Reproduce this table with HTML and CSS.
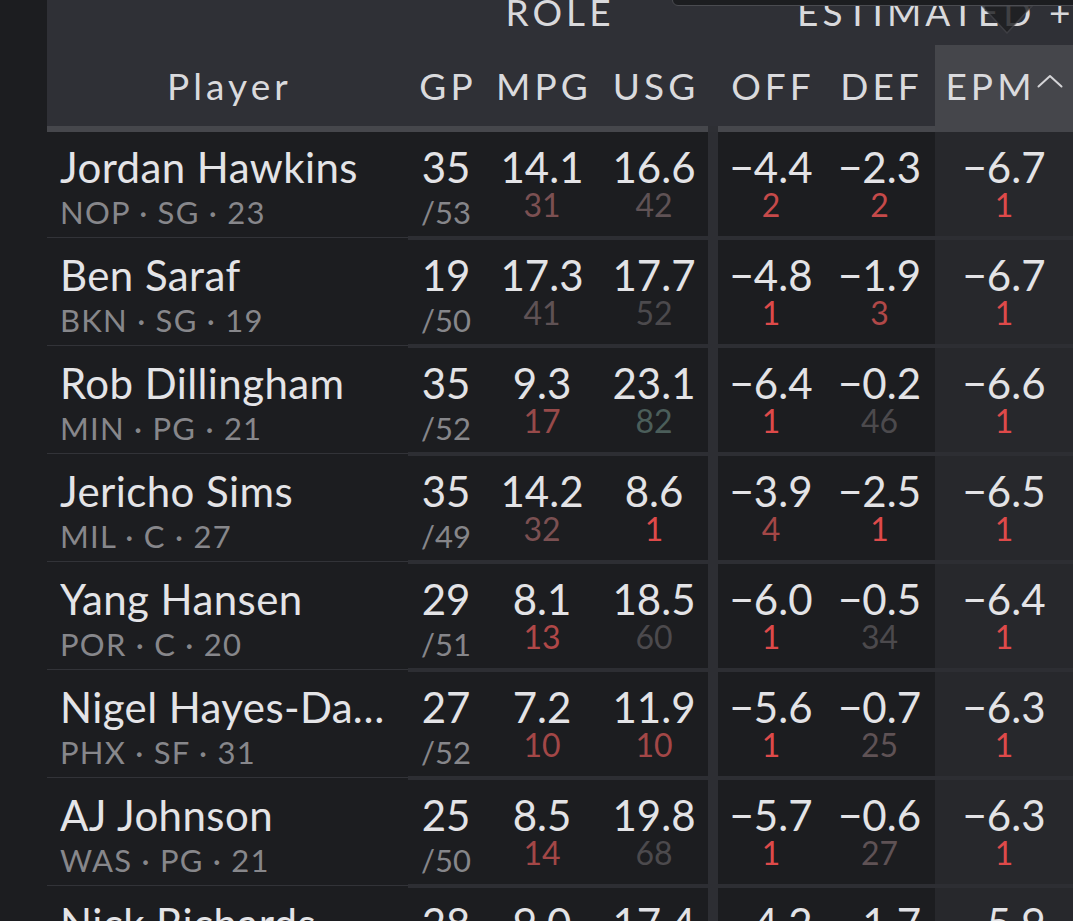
FILE: index.html
```html
<!DOCTYPE html>
<html lang="en">
<head>
<meta charset="utf-8">
<title>EPM table</title>
<link rel="stylesheet" href="styles.css">
</head>
<body>
<div class="page">
  <div class="table">
    <div class="grid grp">
      <div class="g-player"></div>
      <div class="g-role">ROLE</div>
      <div class="g-sep"></div>
      <div class="g-est">ESTIMATED +/-</div>
    </div>
    <div class="grid cols">
      <div class="h">Player</div>
      <div class="h">GP</div>
      <div class="h">MPG</div>
      <div class="h">USG</div>
      <div class="h h-sep"></div>
      <div class="h">OFF</div>
      <div class="h">DEF</div>
      <div class="h h-epm">EPM<svg class="caret" width="26" height="14" viewBox="0 0 26 14"><polyline points="1.5,12.5 13,2 24.5,12.5" fill="none" stroke="#d4d4d7" stroke-width="2" stroke-linecap="round" stroke-linejoin="round"/></svg></div>
    </div>

    <div class="grid row">
      <div class="c-player"><div class="name">Jordan Hawkins</div><div class="meta">NOP · SG · 23</div></div>
      <div class="c-num"><div class="val">35</div><div class="gp">/53</div></div>
      <div class="c-num"><div class="val">14.1</div><div class="rank r30">31</div></div>
      <div class="c-num"><div class="val">16.6</div><div class="rank r40">42</div></div>
      <div class="c-sep"></div>
      <div class="c-num"><div class="val">−4.4</div><div class="rank r2">2</div></div>
      <div class="c-num"><div class="val">−2.3</div><div class="rank r2">2</div></div>
      <div class="c-num c-epm"><div class="val">−6.7</div><div class="rank r1">1</div></div>
    </div>

    <div class="grid row">
      <div class="c-player"><div class="name">Ben Saraf</div><div class="meta">BKN · SG · 19</div></div>
      <div class="c-num"><div class="val">19</div><div class="gp">/50</div></div>
      <div class="c-num"><div class="val">17.3</div><div class="rank r40">41</div></div>
      <div class="c-num"><div class="val">17.7</div><div class="rank r50">52</div></div>
      <div class="c-sep"></div>
      <div class="c-num"><div class="val">−4.8</div><div class="rank r1">1</div></div>
      <div class="c-num"><div class="val">−1.9</div><div class="rank r3">3</div></div>
      <div class="c-num c-epm"><div class="val">−6.7</div><div class="rank r1">1</div></div>
    </div>

    <div class="grid row">
      <div class="c-player"><div class="name">Rob Dillingham</div><div class="meta">MIN · PG · 21</div></div>
      <div class="c-num"><div class="val">35</div><div class="gp">/52</div></div>
      <div class="c-num"><div class="val">9.3</div><div class="rank r17">17</div></div>
      <div class="c-num"><div class="val">23.1</div><div class="rank rg">82</div></div>
      <div class="c-sep"></div>
      <div class="c-num"><div class="val">−6.4</div><div class="rank r1">1</div></div>
      <div class="c-num"><div class="val">−0.2</div><div class="rank r50">46</div></div>
      <div class="c-num c-epm"><div class="val">−6.6</div><div class="rank r1">1</div></div>
    </div>

    <div class="grid row">
      <div class="c-player"><div class="name">Jericho Sims</div><div class="meta">MIL · C · 27</div></div>
      <div class="c-num"><div class="val">35</div><div class="gp">/49</div></div>
      <div class="c-num"><div class="val">14.2</div><div class="rank r30">32</div></div>
      <div class="c-num"><div class="val">8.6</div><div class="rank r1">1</div></div>
      <div class="c-sep"></div>
      <div class="c-num"><div class="val">−3.9</div><div class="rank r4">4</div></div>
      <div class="c-num"><div class="val">−2.5</div><div class="rank r1">1</div></div>
      <div class="c-num c-epm"><div class="val">−6.5</div><div class="rank r1">1</div></div>
    </div>

    <div class="grid row">
      <div class="c-player"><div class="name">Yang Hansen</div><div class="meta">POR · C · 20</div></div>
      <div class="c-num"><div class="val">29</div><div class="gp">/51</div></div>
      <div class="c-num"><div class="val">8.1</div><div class="rank r3">13</div></div>
      <div class="c-num"><div class="val">18.5</div><div class="rank r50">60</div></div>
      <div class="c-sep"></div>
      <div class="c-num"><div class="val">−6.0</div><div class="rank r1">1</div></div>
      <div class="c-num"><div class="val">−0.5</div><div class="rank r50">34</div></div>
      <div class="c-num c-epm"><div class="val">−6.4</div><div class="rank r1">1</div></div>
    </div>

    <div class="grid row">
      <div class="c-player"><div class="name">Nigel Hayes-Davis</div><div class="meta">PHX · SF · 31</div></div>
      <div class="c-num"><div class="val">27</div><div class="gp">/52</div></div>
      <div class="c-num"><div class="val">7.2</div><div class="rank r4">10</div></div>
      <div class="c-num"><div class="val">11.9</div><div class="rank r4">10</div></div>
      <div class="c-sep"></div>
      <div class="c-num"><div class="val">−5.6</div><div class="rank r1">1</div></div>
      <div class="c-num"><div class="val">−0.7</div><div class="rank r40">25</div></div>
      <div class="c-num c-epm"><div class="val">−6.3</div><div class="rank r1">1</div></div>
    </div>

    <div class="grid row">
      <div class="c-player"><div class="name">AJ Johnson</div><div class="meta">WAS · PG · 21</div></div>
      <div class="c-num"><div class="val">25</div><div class="gp">/50</div></div>
      <div class="c-num"><div class="val">8.5</div><div class="rank r4">14</div></div>
      <div class="c-num"><div class="val">19.8</div><div class="rank r50">68</div></div>
      <div class="c-sep"></div>
      <div class="c-num"><div class="val">−5.7</div><div class="rank r1">1</div></div>
      <div class="c-num"><div class="val">−0.6</div><div class="rank r40">27</div></div>
      <div class="c-num c-epm"><div class="val">−6.3</div><div class="rank r1">1</div></div>
    </div>

    <div class="grid row">
      <div class="c-player"><div class="name">Nick Richards</div><div class="meta">PHX · C · 28</div></div>
      <div class="c-num"><div class="val">28</div><div class="gp">/52</div></div>
      <div class="c-num"><div class="val">9.0</div><div class="rank r17">18</div></div>
      <div class="c-num"><div class="val">17.4</div><div class="rank r40">50</div></div>
      <div class="c-sep"></div>
      <div class="c-num"><div class="val">−4.2</div><div class="rank r2">2</div></div>
      <div class="c-num"><div class="val">−1.7</div><div class="rank r3">4</div></div>
      <div class="c-num c-epm"><div class="val">−5.9</div><div class="rank r1">1</div></div>
    </div>
  </div>

  <div class="tooltip"></div>
  <svg class="tip-arrow" width="52" height="32" viewBox="0 0 52 32"><polygon points="1,1 51,1 26,28" fill="rgba(29,30,33,0.82)" stroke="rgba(80,81,86,0.55)" stroke-width="1.5"/></svg>
</div>
</body>
</html>
```

FILE: styles.css
```css
* { box-sizing: content-box; }

html, body {
  margin: 0;
  padding: 0;
  background: #1c1d20;
  overflow: hidden;
  height: 921px;
}

.page {
  position: relative;
  width: 1073px;
  height: 921px;
  overflow: hidden;
  font-family: "Lato", "Noto Sans", "DejaVu Sans", sans-serif;
  color: #e3e3e6;
}

.table {
  margin-left: 47px;
  width: 1026px;
}

.grid {
  display: grid;
  grid-template-columns: 361px 76px 116px 108px 10px 106px 111px 138px;
}

/* group header */
.grp {
  height: 45px;
  background: #2f3036;
  font-size: 37px;
  line-height: 23px;
  letter-spacing: 0.11em;
  color: #d9d9dc;
}
.g-role {
  grid-column: 2 / 5;
  text-align: center;
  padding-left: 4px;
}
.g-est {
  grid-column: 6 / 9;
  padding-left: 79px;
  white-space: nowrap;
  overflow: hidden;
}

/* column header */
.cols {
  background: #2f3036;
}
.h {
  box-sizing: border-box;
  height: 87px;
  line-height: 81px;
  border-bottom: 6px solid #46474c;
  font-size: 37px;
  letter-spacing: 0.11em;
  color: #dadadd;
  text-align: center;
  white-space: nowrap;
  padding-left: 4px;
}
.h-sep {
  border-bottom-color: #2e2f34;
}
.h-epm {
  background: #45464b;
  border-bottom-color: #45464b;
  display: flex;
  align-items: center;
  justify-content: center;
  padding-left: 0;
}
.caret {
  margin-top: -9px;
  margin-left: 1px;
}

/* rows */
.row > div {
  height: 94px;
  padding-top: 10px;
  border-bottom: 4px solid #2d2e33;
}
.c-player {
  padding-left: 13px;
  padding-right: 12px;
  min-width: 0;
  border-bottom-color: transparent !important;
  background: linear-gradient(#323338, #323338) no-repeat;
  background-origin: border-box;
  background-size: 100% 1px;
  background-position: left 0 bottom 2px;
}
.name {
  font-size: 42px;
  line-height: 50px;
  letter-spacing: 0.01em;
  color: #e4e4e7;
  white-space: nowrap;
  overflow: hidden;
  text-overflow: ellipsis;
}
.meta {
  margin-top: 2px;
  font-size: 31px;
  line-height: 36px;
  letter-spacing: 0.04em;
  color: #87878b;
  white-space: nowrap;
}

.c-num {
  text-align: center;
  white-space: nowrap;
}
.val {
  font-size: 42px;
  line-height: 50px;
  color: #e3e3e6;
}
.gp {
  margin-top: 2px;
  font-size: 31px;
  line-height: 36px;
  color: #86868a;
}
.rank {
  font-size: 32px;
  line-height: 26px;
}
.c-sep {
  background: #2d2e33;
  border-bottom-color: #2d2e33 !important;
}
.c-epm {
  background: #27282c;
}

.r1 { color: #de4a4a; }
.r2 { color: #c64a4a; }
.r3 { color: #b04848; }
.r4 { color: #a34747; }
.r17 { color: #974a4a; }
.r30 { color: #7b5052; }
.r40 { color: #5f5255; }
.r50 { color: #4c4a4d; }
.rg { color: #4b5e5a; }

/* tooltip overlay */
.tooltip {
  position: absolute;
  left: 672px;
  top: -40px;
  width: 480px;
  height: 44px;
  background: #1c1d20;
  border: 1.5px solid #4a4b50;
  border-radius: 6px;
}
.tip-arrow {
  position: absolute;
  left: 981px;
  top: 5px;
}
```
